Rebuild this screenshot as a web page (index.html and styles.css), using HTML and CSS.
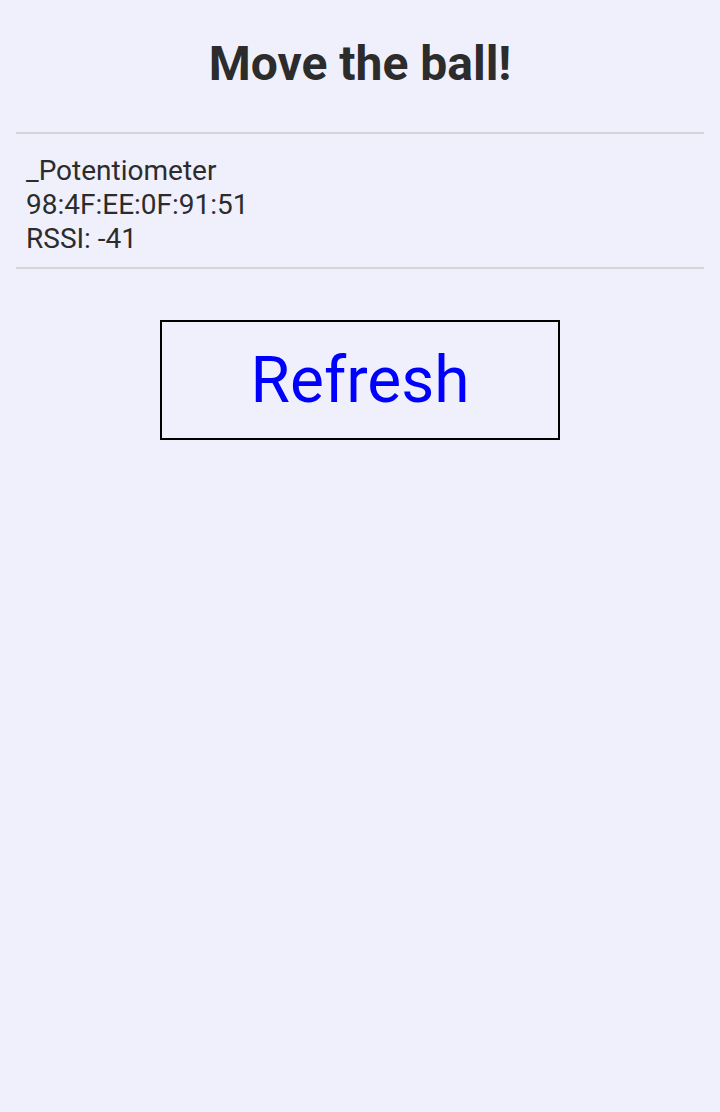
FILE: index.html
```html
<!DOCTYPE html>
<html>
<head>
<meta charset="utf-8">
<link rel="stylesheet" href="styles.css">
</head>
<body>
<div class="page">
  <h1 class="title">Move the ball!</h1>
  <div class="device">
    <div class="line">_Potentiometer</div>
    <div class="line">98:4F:EE:0F:91:51</div>
    <div class="line">RSSI: -41</div>
  </div>
  <div class="actions">
    <button class="refresh">Refresh</button>
  </div>
</div>
</body>
</html>
```
FILE: styles.css
```css
html, body {
  margin: 0;
  padding: 0;
  background: #f0f0fd;
  height: 100%;
}
.page {
  font-family: Roboto, "Liberation Sans", sans-serif;
  color: #2c2c2c;
  padding: 0 16px;
}
.title {
  margin: 0;
  padding-top: 37px;
  height: 96px;
  box-sizing: border-box;
  text-align: center;
  font-size: 48px;
  font-weight: 700;
  line-height: 54px;
}
.device {
  border-top: 2px solid #d5d5d9;
  border-bottom: 2px solid #d5d5d9;
  padding: 20px 10px 11px;
  margin-top: 36px;
}
.line {
  font-size: 28px;
  line-height: 34px;
}
.actions {
  display: flex;
  justify-content: center;
  margin-top: 51px;
}
.refresh {
  width: 400px;
  height: 120px;
  border: 2px solid #000;
  background: transparent;
  color: #0000ff;
  font-family: Roboto, "Liberation Sans", sans-serif;
  font-size: 64px;
  padding: 0;
}
```
